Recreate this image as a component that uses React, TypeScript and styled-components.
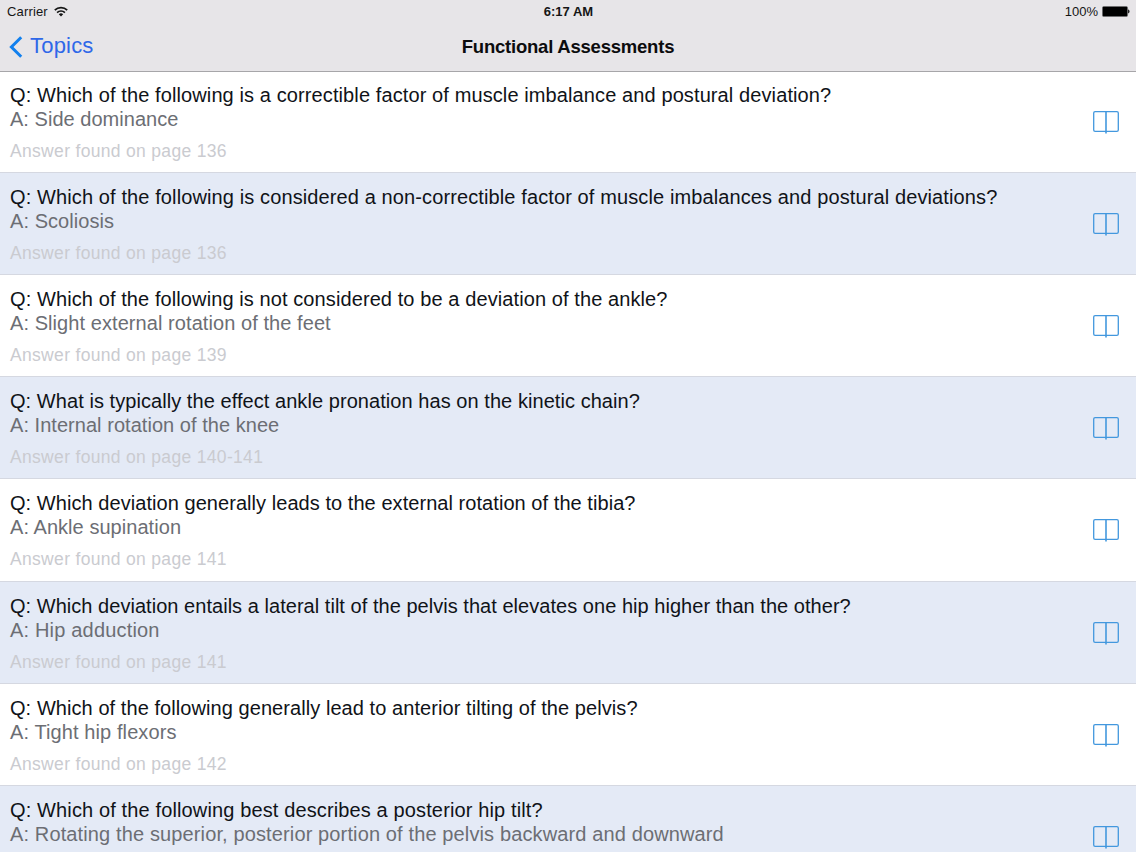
import styled, { createGlobalStyle } from "styled-components";

const GlobalStyle = createGlobalStyle`
  * {
    box-sizing: border-box;
  }
  body {
    margin: 0;
    overflow: hidden;
    background: #ffffff;
    font-family: "Liberation Sans", Arial, sans-serif;
  }
`;

const Screen = styled.div`
  display: flex;
  flex-direction: column;
  width: 100vw;
  height: 100vh;
  overflow: hidden;
`;

const Header = styled.header`
  flex: none;
  height: 72px;
  background: #e7e5e8;
  border-bottom: 1px solid #a7a6a9;
`;

const StatusBar = styled.div`
  display: grid;
  grid-template-columns: 1fr auto 1fr;
  align-items: center;
  height: 23px;
  padding: 0 6px 0 7px;
  font-size: 13px;
  line-height: 15px;
  color: #151515;
`;

const StatusGroup = styled.div<{ $end?: boolean }>`
  display: flex;
  align-items: center;
  justify-content: ${({ $end }) => ($end ? "flex-end" : "flex-start")};
  gap: ${({ $end }) => ($end ? "4px" : "6px")};
  letter-spacing: ${({ $end }) => ($end ? "0" : "0.15px")};
`;

const Time = styled.div`
  font-weight: bold;
`;

const NavBar = styled.nav`
  display: grid;
  grid-template-columns: 1fr auto 1fr;
  align-items: center;
  height: 48px;
  padding: 0 9px;
`;

const BackButton = styled.button`
  display: flex;
  align-items: center;
  gap: 7px;
  padding: 0 0 2px;
  border: 0;
  background: none;
  color: #2f68e8;
  font-family: inherit;
  font-size: 22px;
  line-height: 24px;
  letter-spacing: 0.2px;

  svg {
    margin-top: 2px;
  }
`;

const Title = styled.h1`
  margin: 0;
  font-size: 18.5px;
  line-height: 24px;
  font-weight: bold;
  letter-spacing: -0.22px;
  color: #0c0c0e;
`;

const List = styled.ul`
  flex: 1;
  margin: 0;
  padding: 0;
  list-style: none;
`;

const Row = styled.li`
  display: flex;
  align-items: flex-start;
  justify-content: space-between;
  height: 102.13px;
  padding: 12px 17px 0 10px;
  border-bottom: 1px solid #d5d8e1;
  background: #ffffff;

  &:first-child {
    height: 101px;
    padding-top: 11px;
  }

  &:nth-child(even) {
    background: #e4eaf6;
  }

  svg {
    margin-top: 28px;
  }
`;

const Card = styled.div`
  white-space: nowrap;
`;

const Question = styled.div<{ $spacing: number }>`
  font-size: 20px;
  line-height: 24px;
  letter-spacing: ${({ $spacing }) => $spacing}px;
  color: #101318;
`;

const Answer = styled(Question)`
  color: #6c6e74;
`;

const PageNote = styled.div`
  margin-top: 9px;
  font-size: 17.5px;
  line-height: 22px;
  letter-spacing: 0.32px;
  color: #cacbd0;
`;

interface Item {
  question: string;
  answer: string;
  page?: string;
  // letter spacing of the question and of the answer
  spacing: [number, number];
}

const items: Item[] = [
  {
    question: "Which of the following is a correctible factor of muscle imbalance and postural deviation?",
    answer: "Side dominance",
    page: "136",
    spacing: [0.105, 0.03],
  },
  {
    question: "Which of the following is considered a non-correctible factor of muscle imbalances and postural deviations?",
    answer: "Scoliosis",
    page: "136",
    spacing: [0.113, 0.06],
  },
  {
    question: "Which of the following is not considered to be a deviation of the ankle?",
    answer: "Slight external rotation of the feet",
    page: "139",
    spacing: [0.095, 0.07],
  },
  {
    question: "What is typically the effect ankle pronation has on the kinetic chain?",
    answer: "Internal rotation of the knee",
    page: "140-141",
    spacing: [0.06, 0.04],
  },
  {
    question: "Which deviation generally leads to the external rotation of the tibia?",
    answer: "Ankle supination",
    page: "141",
    spacing: [0.055, 0.05],
  },
  {
    question: "Which deviation entails a lateral tilt of the pelvis that elevates one hip higher than the other?",
    answer: "Hip adduction",
    page: "141",
    spacing: [0.036, 0.18],
  },
  {
    question: "Which of the following generally lead to anterior tilting of the pelvis?",
    answer: "Tight hip flexors",
    page: "142",
    spacing: [0.067, 0.1],
  },
  {
    question: "Which of the following best describes a posterior hip tilt?",
    answer: "Rotating the superior, posterior portion of the pelvis backward and downward",
    spacing: [0.13, 0.128],
  },
];

function WifiIcon() {
  return (
    <svg width="14" height="11" viewBox="0 0 14 11" fill="none" stroke="#151515" strokeWidth="1.7">
      <path d="M0.8 4.2a8.8 8.8 0 0 1 12.4 0M3.1 6.6a5.5 5.5 0 0 1 7.8 0" />
      <path d="M7 10.5 4.8 8.3a3.1 3.1 0 0 1 4.4 0z" fill="#151515" stroke="none" />
    </svg>
  );
}

function BatteryIcon() {
  return (
    <svg width="28" height="11" viewBox="0 0 28 11">
      <rect x="0.4" y="0.4" width="25.2" height="10.2" rx="1.5" fill="#000" stroke="#6f6e70" strokeWidth="0.8" />
      <path d="M26.2 3.6c1.7.2 1.7 3.6 0 3.8z" fill="#000" />
    </svg>
  );
}

function BackIcon() {
  return (
    <svg width="14" height="22" viewBox="0 0 14 22" fill="none" stroke="#1280ee" strokeWidth="3">
      <path d="M12.2 1.2 2.4 11l9.8 9.8" />
    </svg>
  );
}

function BookIcon() {
  return (
    <svg width="26" height="23" viewBox="0 0 26 23" fill="none" stroke="#4398de" strokeWidth="1.3">
      <rect x="0.7" y="0.7" width="24.6" height="19.6" rx="1.4" />
      <path d="M13 0.7V22.5" strokeWidth="1.6" />
    </svg>
  );
}

function App() {
  return (
    <Screen>
      <GlobalStyle />
      <Header>
        <StatusBar>
          <StatusGroup>
            <span>Carrier</span>
            <WifiIcon />
          </StatusGroup>
          <Time>6:17 AM</Time>
          <StatusGroup $end>
            <span>100%</span>
            <BatteryIcon />
          </StatusGroup>
        </StatusBar>
        <NavBar>
          <BackButton>
            <BackIcon />
            Topics
          </BackButton>
          <Title>Functional Assessments</Title>
        </NavBar>
      </Header>
      <List>
        {items.map(({ question, answer, page, spacing }) => (
          <Row key={question}>
            <Card>
              <Question $spacing={spacing[0]}>Q: {question}</Question>
              <Answer $spacing={spacing[1]}>A: {answer}</Answer>
              {page && <PageNote>Answer found on page {page}</PageNote>}
            </Card>
            <BookIcon />
          </Row>
        ))}
      </List>
    </Screen>
  );
}

export default App;
